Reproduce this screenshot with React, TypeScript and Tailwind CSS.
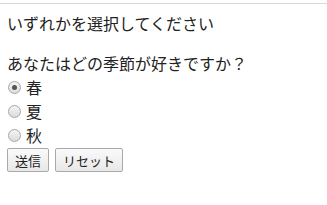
import React from "react";

const Radio: React.FC<{ checked?: boolean }> = ({ checked }) => (
  <span className="w-[13px] h-[13px] rounded-full border border-[#a6a6a6] bg-gradient-to-b from-[#f4f4f4] to-[#dcdcdc] flex items-center justify-center">
    {checked && <span className="w-[5px] h-[5px] rounded-full bg-[#555]" />}
  </span>
);

const App: React.FC = () => {
  const seasons = ["春", "夏", "秋"];
  return (
    <div className="w-[327px] h-[205px] bg-white pt-[3px] font-['Noto_Sans_CJK_JP',sans-serif] text-[#222] text-[16px]">
      <div className="h-px bg-[#d8d8d8]" />
      <div className="px-[7px]">
        <p className="mt-[7px] leading-[24px]">いずれかを選択してください</p>
        <p className="mt-[16px] leading-[24px]">あなたはどの季節が好きですか？</p>
        <div className="flex flex-col">
          {seasons.map((s, i) => (
            <label key={s} className="flex items-center gap-[5px] h-[24px] pl-[1px]">
              <Radio checked={i === 0} />
              <span>{s}</span>
            </label>
          ))}
        </div>
        <div className="flex gap-[6px] mt-[1px]">
          <button className="h-[24px] w-[42px] border border-[#a9a9a9] rounded-[2px] bg-gradient-to-b from-[#fafafa] to-[#e8e8e8] text-[13px] leading-none">送信</button>
          <button className="h-[24px] w-[68px] border border-[#a9a9a9] rounded-[2px] bg-gradient-to-b from-[#fafafa] to-[#e8e8e8] text-[13px] leading-none">リセット</button>
        </div>
      </div>
    </div>
  );
};

export default App;
